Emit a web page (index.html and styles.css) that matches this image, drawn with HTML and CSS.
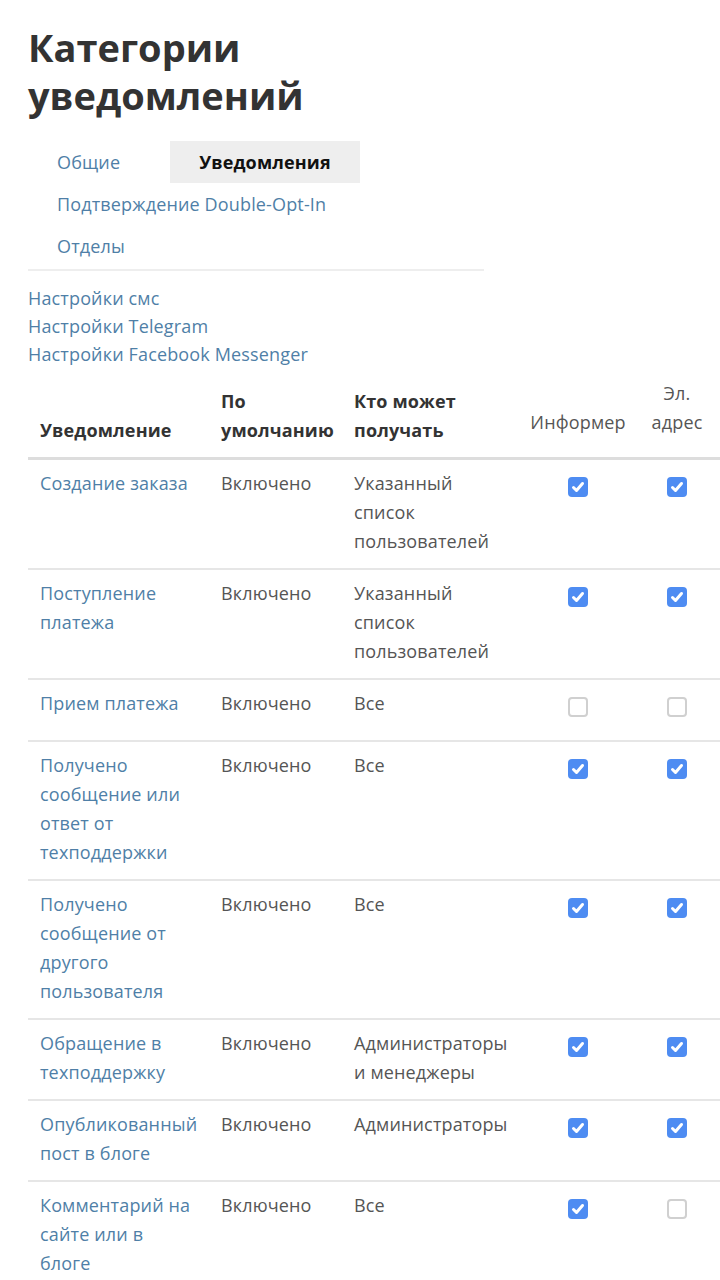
FILE: index.html
```html
<!DOCTYPE html>
<html lang="ru">
<head>
    <meta charset="UTF-8">
    <meta name="viewport" content="width=device-width, initial-scale=1.0">
    <title>Категории уведомлений</title>
    <link rel="stylesheet" href="styles.css">
</head>
<body>

    <h1 class="page-title">Категории уведомлений</h1>

    <ul class="tabs">
        <li><a href="#">Общие</a></li>
        <li class="active"><a href="#">Уведомления</a></li>
        <li><a href="#">Подтверждение Double-Opt-In</a></li>
        <li><a href="#">Отделы</a></li>
    </ul>

    <div class="settings-links">
        <a href="#">Настройки смс</a>
        <a href="#">Настройки Telegram</a>
        <a href="#">Настройки Facebook Messenger</a>
    </div>

    <table class="notify-table">
        <colgroup>
            <col class="col-name">
            <col class="col-default">
            <col class="col-who">
            <col class="col-informer">
            <col class="col-email">
        </colgroup>
        <thead>
            <tr>
                <th>Уведомление</th>
                <th>По умолчанию</th>
                <th>Кто может получать</th>
                <th class="check-head">Информер</th>
                <th class="check-head last">Эл. адрес</th>
            </tr>
        </thead>
        <tbody id="notifyRows">
        </tbody>
    </table>

<script>
const rows = [
    ['Создание заказа', 'Указанный список пользователей', true, true],
    ['Поступление платежа', 'Указанный список пользователей', true, true],
    ['Прием платежа', 'Все', false, false],
    ['Получено сообщение или ответ от техподдержки', 'Все', true, true],
    ['Получено сообщение от другого пользователя', 'Все', true, true],
    ['Обращение в техподдержку', 'Администраторы и менеджеры', true, true],
    ['Опубликованный пост в блоге', 'Администраторы', true, true],
    ['Комментарий на сайте или в блоге', 'Все', true, false]
];

// checkbox markup
function box(checked) {
    if (checked) {
        return '<span class="box on"><svg width="20" height="20" viewBox="0 0 20 20"><path d="M5.5 10.5 L8.5 13.5 L14.5 6.5" fill="none" stroke="#fff" stroke-width="3" stroke-linecap="round" stroke-linejoin="round"/></svg></span>';
    }
    return '<span class="box"></span>';
}

const tbody = document.getElementById('notifyRows');
rows.forEach((r) => {
    const tr = document.createElement('tr');
    tr.innerHTML = `<td><a href="#">${r[0]}</a></td>
        <td>Включено</td>
        <td>${r[1]}</td>
        <td class="check-cell">${box(r[2])}</td>
        <td class="check-cell last">${box(r[3])}</td>`;
    tbody.appendChild(tr);
});
</script>
</body>
</html>
```

FILE: styles.css
```css
body {
    margin: 0;
    padding: 0 0 0 28px;
    font-family: "Open Sans", Arial, sans-serif;
    font-size: 18px;
    letter-spacing: 0.15px;
    color: #555;
    background: #fff;
}
a {
    color: #4f7fa7;
    text-decoration: none;
}
.page-title {
    width: 456px;
    margin: 23px 0 22px;
    font-size: 38px;
    line-height: 48px;
    font-weight: 700;
    letter-spacing: 0;
    color: #333;
}
.tabs {
    display: flex;
    flex-wrap: wrap;
    width: 456px;
    margin: 0;
    padding: 0 0 2px;
    list-style: none;
    border-bottom: 2px solid #eee;
}
.tabs li {
    margin-right: 21px;
}
.tabs a {
    display: block;
    padding: 0 29px;
    line-height: 42px;
}
.tabs li.active {
    background-color: #eee;
}
.tabs li.active a {
    color: #111;
    font-weight: 700;
}
.settings-links {
    margin-top: 13px;
    display: flex;
    flex-direction: column;
    align-items: flex-start;
    line-height: 28px;
}
.notify-table {
    border-collapse: collapse;
    table-layout: fixed;
    width: 693px;
}
.col-name { width: 181px; }
.col-default { width: 133px; }
.col-who { width: 175px; }
.col-informer { width: 122px; }
.col-email { width: 82px; }
.notify-table th {
    padding: 11px 12px 12px;
    line-height: 29px;
    text-align: left;
    vertical-align: bottom;
    font-weight: 700;
    color: #333;
    border-bottom: 3px solid #ddd;
}
.notify-table th.check-head {
    padding-bottom: 20px;
    text-align: center;
    font-weight: 400;
    color: #555;
}
.notify-table td {
    padding: 9px 12px 12px;
    line-height: 29px;
    vertical-align: top;
    border-bottom: 2px solid #e6e6e6;
}
.notify-table td.check-cell {
    text-align: center;
}
.notify-table .last {
    padding-right: 18px;
}
.box {
    display: block;
    box-sizing: border-box;
    width: 20px;
    height: 20px;
    margin: 8px auto 11px;
    border: 2px solid #d0d0d0;
    border-radius: 4px;
    background: #fff;
}
.box.on {
    border: none;
    background: #4e8cf2;
}
.box svg {
    display: block;
}
```
